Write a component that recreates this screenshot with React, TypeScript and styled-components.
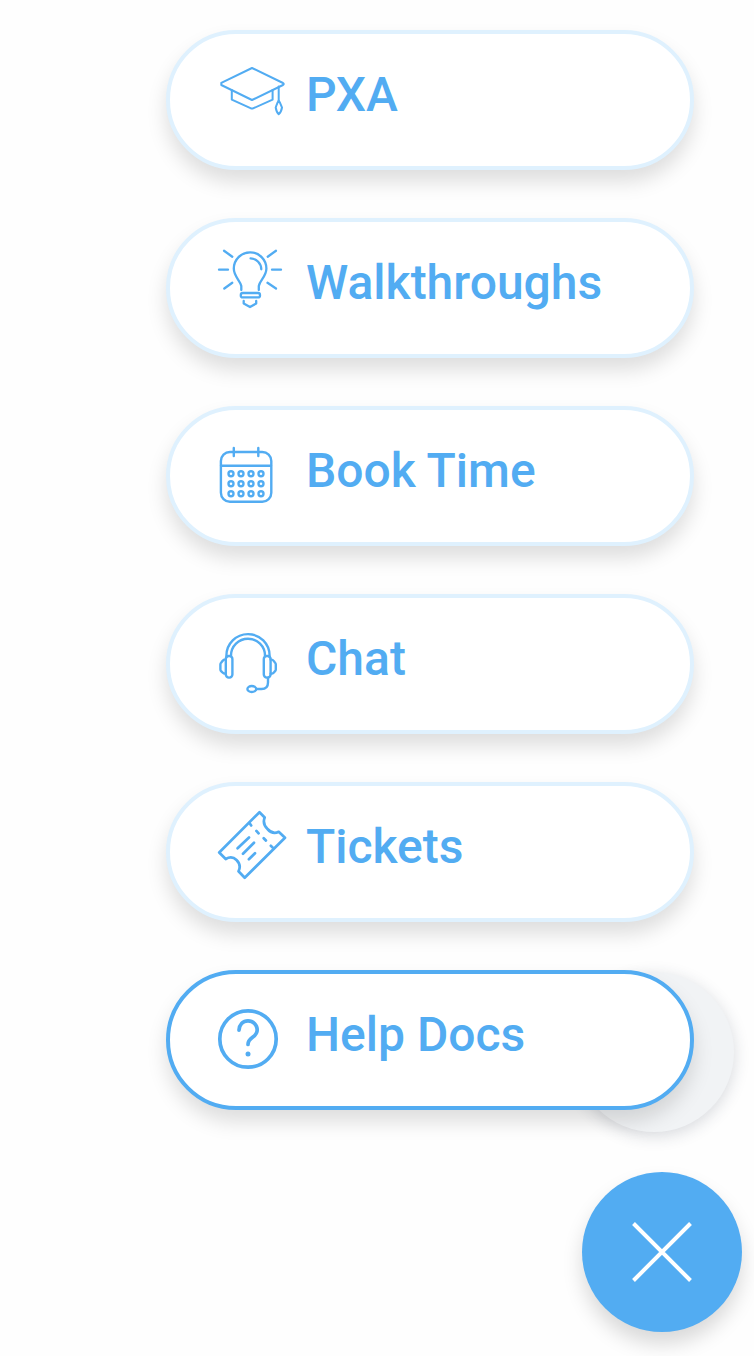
import React from "react";
import styled, { createGlobalStyle } from "styled-components";

const blue = "#52acf2";
const paleBlue = "#dff1fe";

const GlobalStyle = createGlobalStyle`
  *, *::before, *::after { box-sizing: border-box; }
  body {
    margin: 0;
    background: #fefefe;
    font-family: Roboto, "Liberation Sans", sans-serif;
  }
`;

const Widget = styled.main`
  display: flex;
  flex-direction: column;
  align-items: flex-end;
  gap: 62px;
  padding: 30px 12px 24px;
`;

const Menu = styled.ul`
  display: flex;
  flex-direction: column;
  gap: 48px;
  width: 100%;
  max-width: 576px;
  margin: 0;
  padding: 0 48px 0 0;
  list-style: none;
`;

const MenuEntry = styled.li`
  position: relative;
`;

const MenuButton = styled.button<{ $active?: boolean }>`
  position: relative;
  display: flex;
  align-items: center;
  gap: 20px;
  width: 100%;
  padding: 25px 44px 35px;
  border: 4px solid ${(p) => (p.$active ? blue : paleBlue)};
  border-radius: 70px;
  background: #fff;
  box-shadow: 0 12px 20px rgba(0, 0, 0, 0.13);
  color: ${blue};
  font-family: inherit;
  font-size: 48px;
  font-weight: 500;
  line-height: 56px;
  text-align: left;
  cursor: pointer;
`;

const Launcher = styled.span`
  position: absolute;
  top: 2px;
  right: -40px;
  width: 160px;
  height: 160px;
  border-radius: 50%;
  background: #f1f3f5;
  box-shadow: 0 4px 16px rgba(40, 50, 70, 0.18);
`;

const CloseButton = styled.button`
  display: flex;
  align-items: center;
  justify-content: center;
  width: 160px;
  height: 160px;
  padding: 0;
  border: 0;
  border-radius: 50%;
  background: ${blue};
  box-shadow: 0 12px 20px rgba(0, 0, 0, 0.15);
  cursor: pointer;
`;

const IconSvg = styled.svg`
  flex: none;
  width: 72px;
  height: 72px;
  overflow: visible;
  fill: none;
  stroke: currentColor;
  stroke-linecap: round;
  stroke-linejoin: round;
`;

const CrossSvg = styled.svg`
  width: 60px;
  height: 60px;
  fill: none;
  stroke: #fff;
  stroke-width: 4;
`;

function Icon({ weight, children }: { weight: number; children: React.ReactNode }) {
  return (
    <IconSvg viewBox="0 1 72 72" strokeWidth={weight} aria-hidden="true">
      {children}
    </IconSvg>
  );
}

const CapIcon = () => (
  <Icon weight={2}>
    <path d="M38 10 69 25Q70.5 26 69 27L38 42 7.3 27V24.8Z" />
    <path d="M17.8 32V41.7L36.5 50.2Q38 51 39.5 50.2L58.6 41.7V32" />
    <path d="M64.7 28.5V42.7" />
    <path d="M64.7 42.7C63 45 62.5 47.5 61.7 49.5 62.2 52.5 63.2 55 64.7 56.2 66.3 55 67.5 52.5 68 49.5 67 47.5 66.5 45 64.7 42.7Z" />
  </Icon>
);

const BulbIcon = () => (
  <Icon weight={2.3}>
    <path d="M27.3 44V40C26 34 19.8 30.5 19.8 22.6A16.3 16.3 0 0 1 52.4 22.6C52.4 30.5 46 34 44.8 40V44" />
    <path d="M36.6 12.4A11 11 0 0 1 47.3 23.3" />
    <rect x="26.8" y="47" width="19.2" height="4.4" rx="2" />
    <path d="M29.7 55V57.6L36 61 42.2 57.6V55" />
    <path d="M10 4.8 18.3 10.7M62 4.8 53.7 10.7M5 23.7H14M58 23.7H67M10.3 42.5 18.3 36.8M62 42.5 53.5 36.8" />
  </Icon>
);

const dotColumns = [17, 27, 37, 47];
const dotRows = [39.7, 49.7, 59.7];

const CalendarIcon = () => (
  <Icon weight={2.4}>
    <rect x="6.9" y="18" width="50.4" height="49.8" rx="9" />
    <path d="M7 31.7H57M19.8 14V22M44.3 14V22" />
    {dotRows.map((y) => dotColumns.map((x) => <circle key={`${x}-${y}`} cx={x} cy={y} r="2.5" />))}
  </Icon>
);

const HeadsetIcon = () => (
  <Icon weight={2.4}>
    <path d="M12.4 35V33.7A21.6 21.6 0 0 1 55.6 33.7V35M17 34V33.7A17 17 0 0 1 51 33.7V34" />
    <rect x="11.8" y="34" width="6.6" height="21.6" rx="3" />
    <rect x="49.8" y="34" width="6.8" height="21.6" rx="3" />
    <path d="M11.8 37.4C8.6 37.4 8.8 39 7.2 40.6Q6.4 41.2 6.4 42.4V47.4Q6.4 48.6 7.2 49.2C8.8 50.6 8.8 51.8 11.8 51.8" />
    <path d="M56.6 37.4C59.6 37.4 59.6 39 61 40.6Q61.8 41.2 61.8 42.4V47.4Q61.8 48.6 61 49.2C59.6 50.6 59.6 51.8 56.6 51.8" />
    <path d="M54 55.6V60.5Q54 67 47.5 67H42.4" />
    <ellipse cx="37.8" cy="67" rx="4.4" ry="3" />
  </Icon>
);

const TicketIcon = () => (
  <Icon weight={2.7}>
    <path d="M45.5 2.2 50.7 7.5C49 11.5 50.5 16 53.5 19 56.5 22.5 60.5 23.8 64.7 21.8L71 27.8 30.7 67.7 24.5 61.3C26.5 57.5 25.5 53 22.5 50 19.5 47 15.5 46.8 11.7 49L5.2 42.5Z" />
    <path d="M35 27.5 23.6 38.3M40 32.7 29 43.7M41 43.3 34.9 49.3" />
    <path d="M35.8 13.5 37.2 15.5M42.4 20.9 44.6 23.3M49.7 28.2 51.9 30.5M56.8 35.8 58.6 37.4" />
  </Icon>
);

const HelpIcon = () => (
  <Icon weight={3.7}>
    <circle cx="34" cy="41" r="28.2" />
    <path d="M25 32.2C25.4 26.4 29 22.8 34 22.8A9.2 9.2 0 0 1 43.2 32C43.2 39.8 34 38.8 34 46.4" />
    <circle cx="34" cy="56" r="2.5" fill="currentColor" stroke="none" />
  </Icon>
);

const entries = [
  { label: "PXA", Glyph: CapIcon },
  { label: "Walkthroughs", Glyph: BulbIcon },
  { label: "Book Time", Glyph: CalendarIcon },
  { label: "Chat", Glyph: HeadsetIcon },
  { label: "Tickets", Glyph: TicketIcon },
  { label: "Help Docs", Glyph: HelpIcon, active: true },
];

export default function App() {
  return (
    <>
      <GlobalStyle />
      <Widget>
        <Menu>
          {entries.map(({ label, Glyph, active }) => (
            <MenuEntry key={label}>
              {active && <Launcher />}
              <MenuButton type="button" $active={active}>
                <Glyph />
                {label}
              </MenuButton>
            </MenuEntry>
          ))}
        </Menu>
        <CloseButton type="button" aria-label="Close">
          <CrossSvg viewBox="0 0 60 60" aria-hidden="true">
            <path d="M1.5 1.5 58.5 58.5M58.5 1.5 1.5 58.5" />
          </CrossSvg>
        </CloseButton>
      </Widget>
    </>
  );
}
